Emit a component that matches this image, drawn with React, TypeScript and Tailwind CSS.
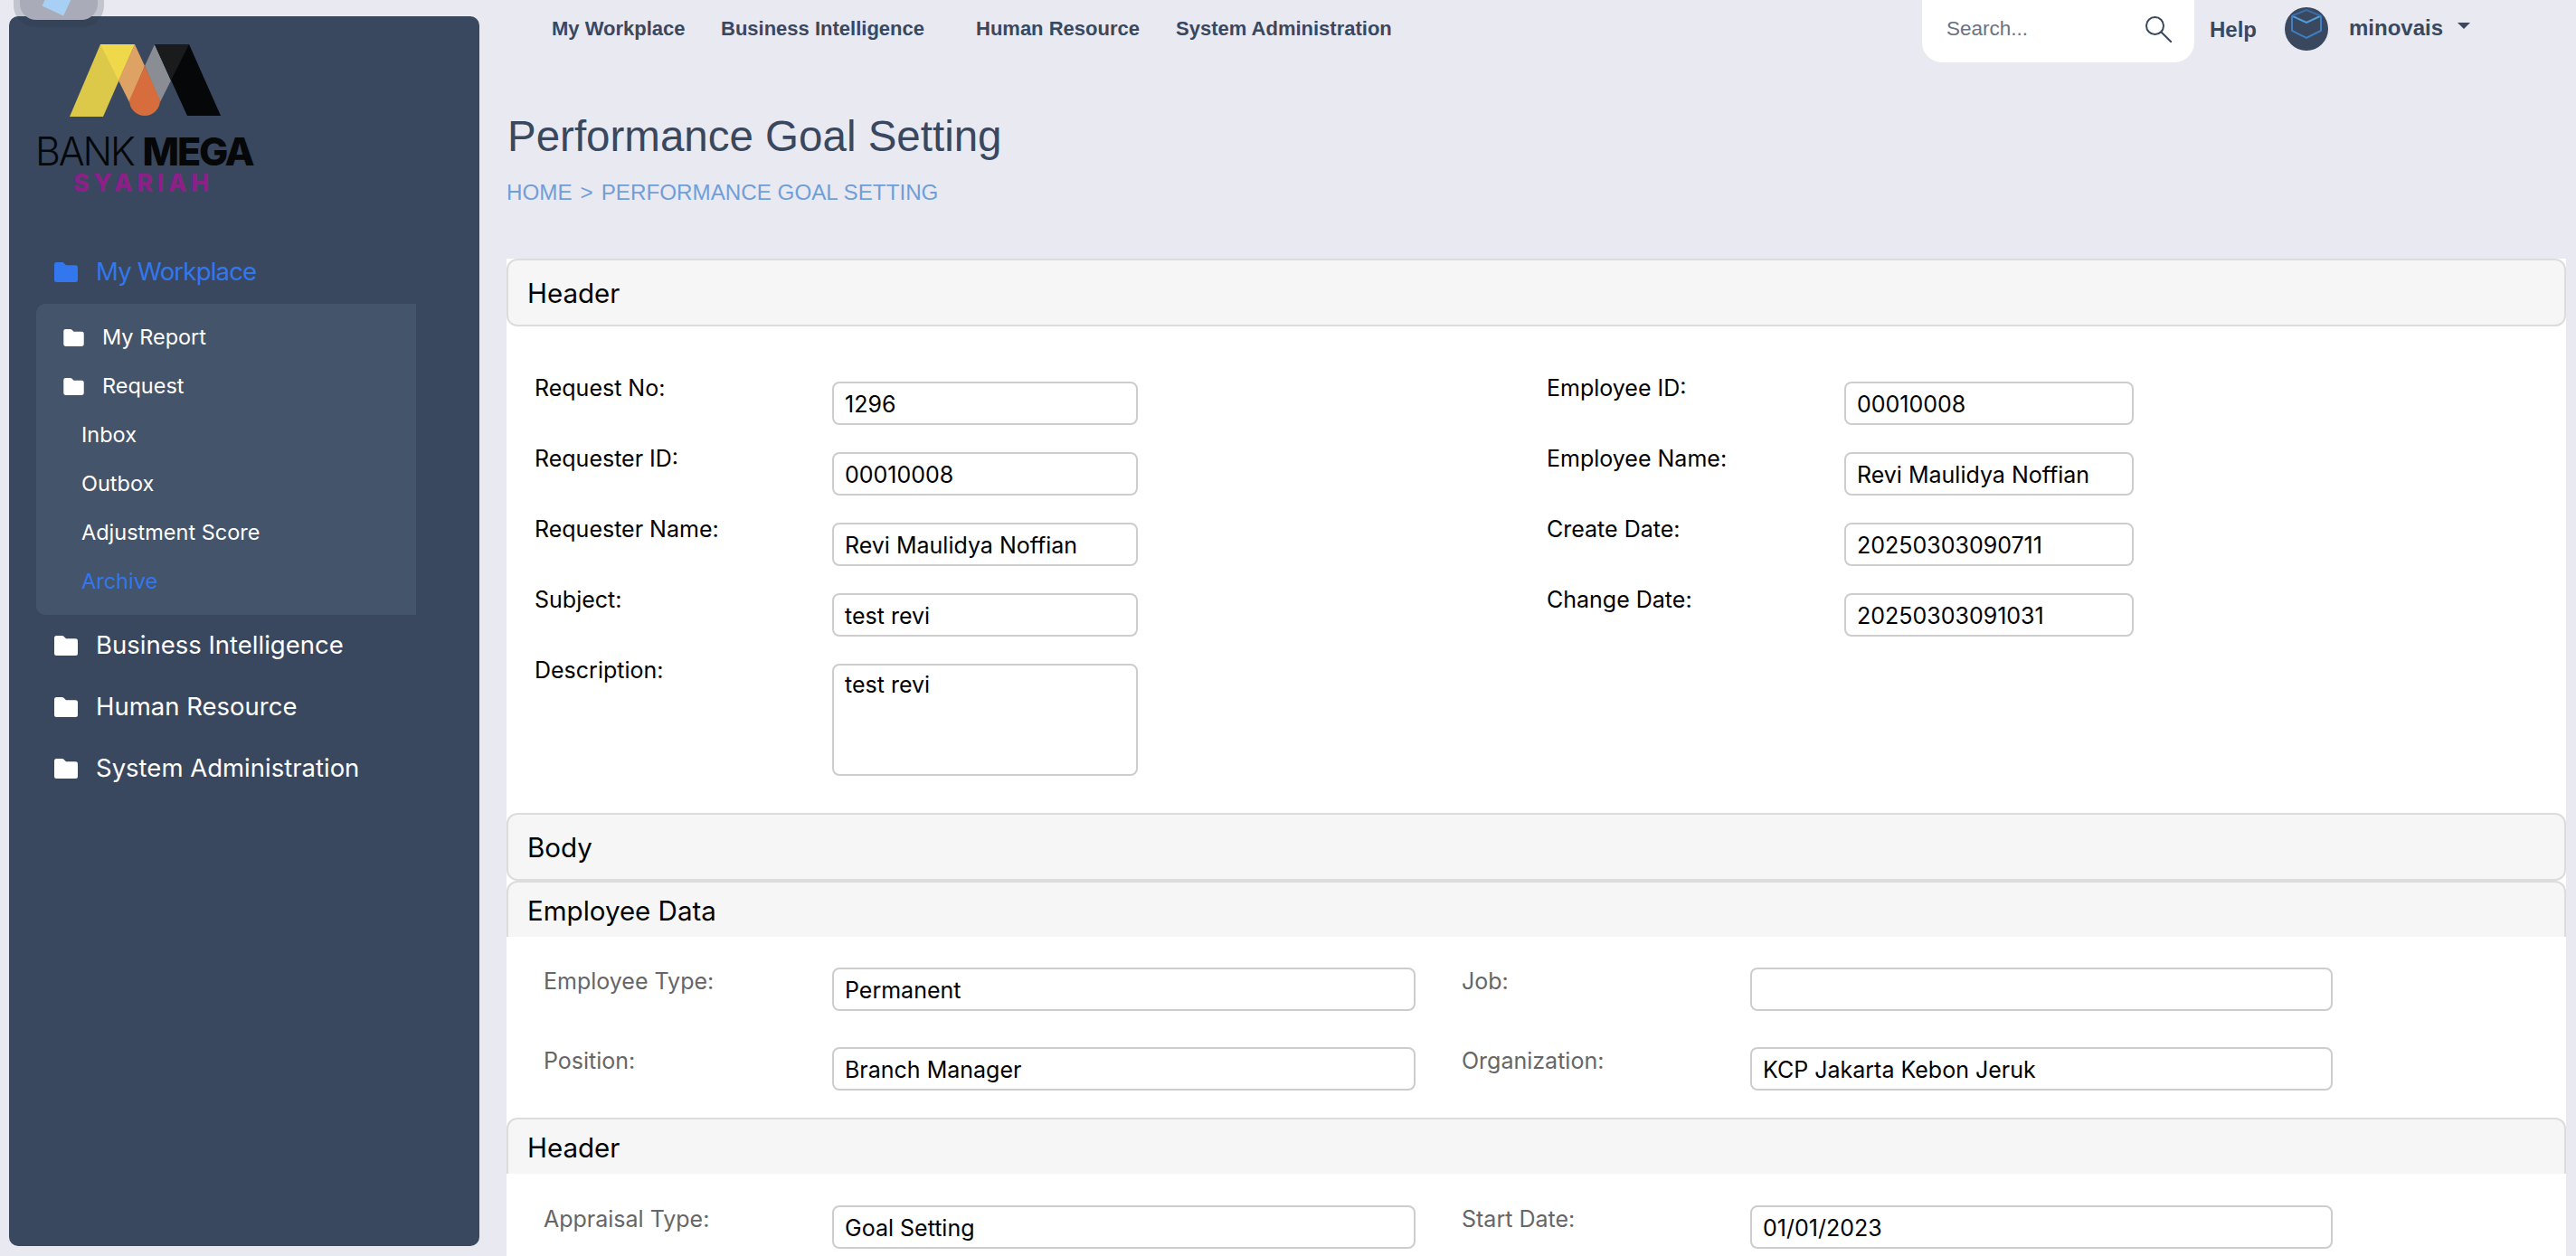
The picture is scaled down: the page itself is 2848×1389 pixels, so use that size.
const sans = "[font-family:Inter,sans-serif]";

const Folder = ({ className }: { className: string }) => (
  <svg viewBox="0 0 26 22" className={className} fill="currentColor">
    <path d="M2.500 0h6.200c.7 0 1.300.3 1.800.7L13 3.200h10.500A2.500 2.500 0 0 1 26 5.700v13.800a2.500 2.500 0 0 1-2.500 2.500h-21A2.500 2.500 0 0 1 0 19.500V2.500A2.500 2.500 0 0 1 2.500 0z" />
  </svg>
);

const Logo = () => (
  <div className="ml-[33px] mt-[31px] h-[163px] w-[240px]">
    <svg viewBox="0 0 167 80" className="ml-[34px] h-[80px] w-[167px]">
      <polygon points="34,0 72,0 37,80 0,80" fill="#dcc94a" />
      <polygon points="34,0 72,0 54,40" fill="#efd849" />
      <polygon points="72,0 83,24 66,64 54,40" fill="#dea264" />
      <polygon points="94,0 112,40 100,64 83,24" fill="#8a8d93" />
      <path d="M83 24L100 62A17 17 0 1 1 66 62Z" fill="#d76c3c" />
      <polygon points="94,0 132,0 167,79 130,79" fill="#050709" />
      <polygon points="94,0 132,0 112,40" fill="#1a1b1c" />
    </svg>
    <div className="-ml-[4px] mt-[19px] flex h-[38px] items-center whitespace-nowrap [font-family:Inter,sans-serif] text-[43px] leading-none tracking-[-2.200px] text-[#050709]">
      <span className="font-light">BANK</span>
      <span className="ml-[10px] font-extrabold">MEGA</span>
    </div>
    <div className="ml-[38px] mt-[4px] whitespace-nowrap [font-family:Inter,sans-serif] text-[27px] font-extrabold leading-[26px] tracking-[4.500px] text-[#8c2088]">
      SYARIAH
    </div>
  </div>
);

const SubItem = ({ label, folder, active }: { label: string; folder?: boolean; active?: boolean }) => (
  <div className={`flex h-[54px] items-center text-[23.500px] ${active ? "text-[#3377ee]" : "text-white"} ${folder ? "pl-[30px]" : "pl-[50px]"}`}>
    {folder && <Folder className="mr-[20px] h-[19px] w-[23px]" />}
    {label}
  </div>
);

const TopItem = ({ label }: { label: string }) => (
  <div className="flex h-[68px] items-center pl-[50px] text-[27.500px] text-white">
    <Folder className="mr-[20px] h-[22px] w-[26px]" />
    {label}
  </div>
);

const Sidebar = () => (
  <aside className={`ml-[10px] mt-[18px] h-[1360px] w-[520px] shrink-0 rounded-[10px] bg-[#39485e] ${sans}`}>
    <Logo />
    <div className="mt-[67px] flex h-[44px] items-center pl-[50px] text-[27.500px] tracking-[-0.800px] text-[#3377ee]">
      <Folder className="mr-[20px] h-[22px] w-[26px]" />
      My Workplace
    </div>
    <div className="ml-[30px] mt-[13px] w-[420px] rounded-l-[10px] bg-[#44546a] py-[10px]">
      <SubItem label="My Report" folder />
      <SubItem label="Request" folder />
      <SubItem label="Inbox" />
      <SubItem label="Outbox" />
      <SubItem label="Adjustment Score" />
      <SubItem label="Archive" active />
    </div>
    <TopItem label="Business Intelligence" />
    <TopItem label="Human Resource" />
    <TopItem label="System Administration" />
  </aside>
);

const TopBar = () => (
  <header className="flex h-[69px] items-start [font-family:Liberation_Sans,sans-serif] font-bold text-[#39485e]">
    <nav className="ml-[50px] flex h-[62px] w-[1515px] items-center whitespace-nowrap text-[22px]">
      <span className="w-[187px]">My Workplace</span>
      <span className="w-[282px]">Business Intelligence</span>
      <span className="w-[221px]">Human Resource</span>
      <span>System Administration</span>
    </nav>
    <div className="flex h-[69px] w-[301px] items-center justify-between rounded-b-[22px] bg-white pb-[5px] pl-[27px] pr-[25px]">
      <span className="text-[22.500px] font-normal text-[#6b7280]">Search...</span>
      <svg viewBox="0 0 29 29" className="h-[29px] w-[29px]" fill="none" stroke="#39485e" strokeWidth="2">
        <circle cx="10.500" cy="10.500" r="9.500" />
        <path d="M17.500 17.500L28.500 28.500" strokeLinecap="round" />
      </svg>
    </div>
    <span className="ml-[17px] mt-[20px] text-[24px] leading-[26px]">Help</span>
    <svg viewBox="0 0 48 48" className="ml-[31px] mt-[8px] h-[48px] w-[48px]" fill="none" strokeWidth="2">
      <circle cx="24" cy="24" r="24" fill="#39485e" />
      <path d="M8 9.500L24 17L40 9.500" stroke="#4f9fdc" />
      <path d="M8 9.500L24 3L40 9.500" stroke="#3a6ea8" />
      <path d="M8 9.500V26L24 34L40 26V9.500" stroke="#3f80c4" />
    </svg>
    <span className="ml-[23px] mt-[18px] text-[24px] leading-[26px]">minovais</span>
    <span className="ml-[16px] mt-[25px] h-0 w-0 border-x-[7px] border-t-[7px] border-x-transparent border-t-[#39485e]" />
  </header>
);

const Field = ({ label, value, box, muted }: { label: string; value?: string; box: string; muted?: boolean }) => (
  <div className="flex items-start">
    <label className={`shrink-0 leading-[30px] ${muted ? "w-[319px] text-[#666666]" : "-mt-[8px] w-[329px] text-black"}`}>{label}</label>
    <div className={`h-[48px] shrink-0 rounded-[8px] border-2 border-[#cdcdcd] bg-white px-[12px] leading-[46px] text-black ${box}`}>{value}</div>
  </div>
);

const CardHeader = ({ title, open }: { title: string; open?: boolean }) => (
  <div className={`flex items-center rounded-[12px] border-2 border-[#dcdcdc] bg-[#f6f6f6] pl-[21px] pt-[2px] text-[29.500px] text-black ${open ? "h-[62px] rounded-b-none border-b-0" : "h-[75px]"}`}>
    {title}
  </div>
);

const HeaderForm = () => (
  <div className="grid h-[538px] grid-cols-[1119px_1fr] content-start pl-[31px] pt-[61px] text-[25px]">
    <div className="flex flex-col gap-[30px]">
      <Field label="Request No:" value="1296" box="w-[338px]" />
      <Field label="Requester ID:" value="00010008" box="w-[338px]" />
      <Field label="Requester Name:" value="Revi Maulidya Noffian" box="w-[338px]" />
      <Field label="Subject:" value="test revi" box="w-[338px]" />
      <div className="flex items-start">
        <label className="-mt-[8px] w-[329px] shrink-0 leading-[30px] text-black">Description:</label>
        <div className="h-[124px] w-[338px] rounded-[8px] border-2 border-[#cdcdcd] px-[12px] pt-[6px] leading-[30px] text-black">test revi</div>
      </div>
    </div>
    <div className="flex flex-col gap-[30px]">
      <Field label="Employee ID:" value="00010008" box="w-[320px]" />
      <Field label="Employee Name:" value="Revi Maulidya Noffian" box="w-[320px]" />
      <Field label="Create Date:" value="20250303090711" box="w-[320px]" />
      <Field label="Change Date:" value="20250303091031" box="w-[320px]" />
    </div>
  </div>
);

export default function App() {
  return (
    <div className="relative flex h-[1389px] w-[2848px] overflow-hidden bg-[#e9e9f2]">
      {/* floating widget cut by the top of the page */}
      <div className="absolute -top-[70px] left-[15px] z-10 h-[100px] w-[100px] rounded-[24px] bg-[#2a3040]/20 p-[7px]">
        <div className="relative h-[85px] w-[86px] overflow-hidden rounded-[18px] bg-[#a9abb8]">
          <div className="absolute left-[28px] top-[54px] h-[22px] w-[26px] rotate-[25deg] bg-[#a8d0f4]" />
        </div>
      </div>
      <Sidebar />
      <main className="ml-[30px] w-[2277px] shrink-0">
        <TopBar />
        <h1 className="ml-[1px] mt-[58px] whitespace-nowrap [font-family:Liberation_Sans,sans-serif] text-[47.500px] leading-[48px] text-[#39485e]">Performance Goal Setting</h1>
        <div className="mt-[22px] flex gap-[9px] [font-family:Liberation_Sans,sans-serif] text-[24.200px] leading-[32px] text-[#6f9fd8]">
          <span>HOME</span><span>&gt;</span><span>PERFORMANCE GOAL SETTING</span>
        </div>
        <section className={`mt-[57px] bg-white ${sans}`}>
          <CardHeader title="Header" />
          <HeaderForm />
          <CardHeader title="Body" />
          <CardHeader title="Employee Data" open />
          <div className="grid h-[200px] grid-cols-[1015px_1fr] content-start gap-y-[40px] pl-[41px] pt-[34px] text-[25px]">
            <Field label="Employee Type:" value="Permanent" box="w-[645px]" muted />
            <Field label="Job:" box="w-[644px]" muted />
            <Field label="Position:" value="Branch Manager" box="w-[645px]" muted />
            <Field label="Organization:" value="KCP Jakarta Kebon Jeruk" box="w-[644px]" muted />
          </div>
          <CardHeader title="Header" open />
          <div className="grid h-[91px] grid-cols-[1015px_1fr] content-start pl-[41px] pt-[35px] text-[25px]">
            <Field label="Appraisal Type:" value="Goal Setting" box="w-[645px]" muted />
            <Field label="Start Date:" value="01/01/2023" box="w-[644px]" muted />
          </div>
        </section>
      </main>
    </div>
  );
}
